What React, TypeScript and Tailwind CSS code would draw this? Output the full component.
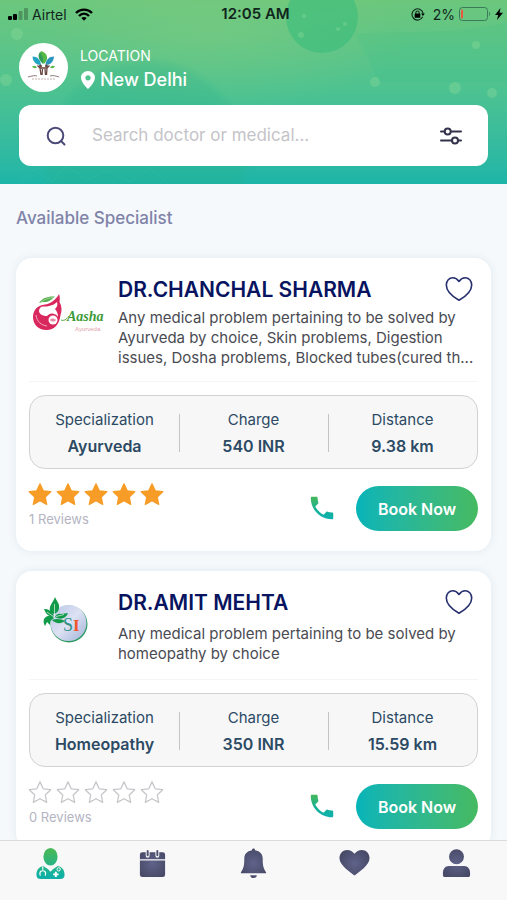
import type { ReactNode } from 'react'

interface Doctor {
  id: string
  name: string
  about: string
  specialization: string
  charge: string
  distance: string
  rating: number
  reviews: number
  logo: ReactNode
}

const STAR_PATH =
  'M12 1.8 L15.1 8.4 L22.3 9.3 L17 14.3 L18.4 21.4 L12 17.9 L5.6 21.4 L7 14.3 L1.7 9.3 L8.9 8.4 Z'

function AashaLogo() {
  return (
    <svg viewBox="0 0 76 44" className="h-11 w-19" role="img" aria-label="Aasha Ayurveda">
      <path
        d="M30 3c1 3 1 5 .5 8 2.500 4 2.500 9 1 13-1 9-6 15-14 15C9 39 4 33 4 26c0-7 5-12 12-12.500 5-.5 11-4.500 14-10.500Z"
        fill="#d9285d"
      />
      <path
        d="M12 16c2-1 5 0 8-1 4-1 6-2 8-4 1 3 0 5-2 7 2 2 3 5 3 8-1-2-3-3-4-3-3-1-5 0-7 2-4 0-8-2-8-5 0-2 1-3 2-4Z"
        fill="#fff"
      />
      <circle cx="24" cy="29" r="4.500" fill="#fff" />
      <path d="M21 29c1-2 4-2 6 0-1 2-5 2-6 0Z" fill="#e98aa5" />
      <path d="M7 24c1 7 5 10 11 11" stroke="#f3a9bf" fill="none" />
      <path d="M10 12C13 7 19 5 26 5.500c-3 2-4 4-7 5-3 1-6 0-9 1.500Z" fill="#55ad4d" />
      <path d="M12 11c4-3 8-4 12-4.500" stroke="#b9e0b0" strokeWidth="0.700" fill="none" />
      <path d="M32 29c3 1 5 0 8-4" stroke="#55ad4d" fill="none" />
      <text
        x="38"
        y="30"
        fill="#3d9a36"
        fontSize="14"
        fontStyle="italic"
        fontWeight="700"
        fontFamily="Liberation Serif, serif"
      >
        Aasha
      </text>
      <text x="46" y="40" fill="#dfa0ab" fontSize="6" fontFamily="Liberation Sans, sans-serif">
        Ayurveda
      </text>
    </svg>
  )
}

function SiLogo() {
  return (
    <svg viewBox="0 0 76 48" className="h-12 w-19" role="img" aria-label="SI">
      <defs>
        <linearGradient id="si-disc" x1="0" y1="0" x2="1" y2="1">
          <stop offset="0" stopColor="#b9c5e6" />
          <stop offset="0.5" stopColor="#dde2f4" />
          <stop offset="1" stopColor="#9fb0d6" />
        </linearGradient>
      </defs>
      <circle cx="40" cy="29" r="18.500" fill="#2d9c63" />
      <circle cx="39.500" cy="28" r="18" fill="url(#si-disc)" />
      <path
        d="M26 2c2 5 5 7 4 11 0 3-2 5-5 6-3-1-5-3-4-7 1-3 3-5 5-10ZM15 14c4 0 6 1 9 5l1 3c-4 0-8-2-10-8ZM15 24c3-4 7-4 10-1-3 2-4 3-4 7l-3-3-2 4c-1-2-2-4-1-7ZM26 22c1-3 4-4 6-3l7-1c-2 6-8 7-13 4ZM23 25c4-2 10-1 13 1-4 3-9 3-13-1Z"
        fill="#119a4a"
      />
      <path d="M25.500 9v13M18 17l7 5M27 21.500l8-2" stroke="#e6f5ea" strokeWidth="0.700" />
      <text x="34" y="36" fill="#2d8f83" fontSize="18" fontFamily="Liberation Serif, serif">
        S
      </text>
      <text x="44" y="36" fill="#f0562b" fontSize="17" fontWeight="700" fontFamily="Liberation Serif, serif">
        I
      </text>
    </svg>
  )
}

const doctors: Doctor[] = [
  {
    id: 'chanchal',
    name: 'DR.CHANCHAL SHARMA',
    about:
      'Any medical problem pertaining to be solved by Ayurveda by choice, Skin problems, Digestion issues, Dosha problems, Blocked tubes(cured th...',
    specialization: 'Ayurveda',
    charge: '540 INR',
    distance: '9.38 km',
    rating: 5,
    reviews: 1,
    logo: <AashaLogo />,
  },
  {
    id: 'amit',
    name: 'DR.AMIT MEHTA',
    about: 'Any medical problem pertaining to be solved by homeopathy by choice',
    specialization: 'Homeopathy',
    charge: '350 INR',
    distance: '15.59 km',
    rating: 0,
    reviews: 0,
    logo: <SiLogo />,
  },
]

function HeaderBackdrop() {
  return (
    <svg
      className="absolute inset-0 h-full w-full"
      viewBox="0 0 507 184"
      preserveAspectRatio="xMidYMid slice"
      aria-hidden="true"
    >
      <defs>
        <radialGradient id="header-glow">
          <stop offset="0" stopColor="#7fcc80" stopOpacity="0.5" />
          <stop offset="1" stopColor="#7fcc80" stopOpacity="0" />
        </radialGradient>
        <radialGradient id="header-globe">
          <stop offset="0.7" stopColor="#27b08c" stopOpacity="0.3" />
          <stop offset="0.9" stopColor="#27b08c" stopOpacity="0.25" />
          <stop offset="1" stopColor="#27b08c" stopOpacity="0" />
        </radialGradient>
      </defs>
      <ellipse cx="210" cy="30" rx="200" ry="80" fill="url(#header-glow)" />
      <circle cx="322" cy="17" r="36" fill="#38bd7c" opacity="0.6" />
      <circle cx="146" cy="162" r="106" fill="url(#header-globe)" />
      <path d="M355 34C400 30 450 36 507 22v60H380Z" fill="#2dbb8a" opacity="0.12" />
      <g fill="#8fdc9b" opacity="0.35">
        <circle cx="301" cy="35" r="3" />
        <circle cx="338" cy="29" r="2" />
        <circle cx="345" cy="24" r="2" />
        <circle cx="304" cy="16" r="2" />
        <circle cx="476" cy="45" r="4" />
        <circle cx="455" cy="88" r="6" />
        <circle cx="492" cy="93" r="5" />
        <circle cx="375" cy="82" r="5" />
        <circle cx="17" cy="34" r="6" />
        <circle cx="6" cy="80" r="6" />
      </g>
      <path d="M20 184l14-14 18 12 14-16 22 14 18-10 24 12 20-14 16 14" stroke="#39c0ab" opacity="0.3" fill="none" />
    </svg>
  )
}

function StatusBar() {
  return (
    <div className="grid h-7 grid-cols-3 items-center px-2 text-[14px] text-[#10261c]">
      <div className="flex items-center gap-1">
        <svg viewBox="0 0 20 12" className="h-3 w-5" aria-hidden="true">
          <rect x="0" y="8" width="4" height="4" rx="1" />
          <rect x="5" y="6" width="4" height="6" rx="1" />
          <rect x="10.500" y="3" width="4" height="9" rx="1" opacity="0.25" />
          <rect x="16" y="0" width="4" height="12" rx="1" opacity="0.25" />
        </svg>
        <span>Airtel</span>
        <svg viewBox="0 0 18 13" className="ml-1 h-[13px] w-[18px]" fill="none" stroke="#000" strokeWidth="2.400" aria-hidden="true">
          <path d="M1 5C5.500 0.500 12.500 0.500 17 5" />
          <path d="M4 8c3-3 7-3 10 0" />
          <path d="M9 12.800 6.300 10c1.600-1.400 3.800-1.400 5.400 0Z" fill="#000" stroke="none" />
        </svg>
      </div>
      <span className="pl-1 text-center text-[15px] font-semibold whitespace-nowrap">12:05 AM</span>
      <div className="-mr-1 flex items-center justify-end gap-1">
        <svg viewBox="0 0 16 16" className="mr-1 h-[15px] w-[15px]" aria-hidden="true">
          <path d="M13.500 10.500A6 6 0 1 1 14 7" fill="none" stroke="#10261c" strokeWidth="1.200" />
          <path d="M11.800 7h4l-2 2.600Z" />
          <rect x="5" y="7" width="6" height="4.500" rx="0.600" />
          <path d="M6.200 7.500V6a1.800 1.800 0 0 1 3.600 0v1.500" fill="none" stroke="#10261c" strokeWidth="1.100" />
        </svg>
        <span>2%</span>
        <svg viewBox="0 0 32 14" className="h-[14px] w-8" aria-hidden="true">
          <rect x="0.500" y="0.500" width="28" height="13" rx="3" fill="none" stroke="#3b7a58" />
          <rect x="2" y="2.500" width="2" height="9" rx="1" fill="#f0563c" />
          <path d="M30 4.500q2 2.500 0 5Z" fill="#3b7a58" />
        </svg>
        <svg viewBox="0 0 8 12" className="h-3 w-2" aria-hidden="true">
          <path d="M5.500 0 0 7h3.200L2 12l6-7.200H4.600Z" />
        </svg>
      </div>
    </div>
  )
}

function ClinicAvatar() {
  return (
    <svg viewBox="0 0 49 49" className="h-[49px] w-[49px]" role="img" aria-label="Clinic">
      <circle cx="24.500" cy="24.500" r="24.500" fill="#fff" />
      <path d="M22 8c7 2 8 8 3 13-5-4-6-8-3-13Z" fill="#56b947" />
      <path d="M21 9c-3 4-1 8 3 12V15Z" fill="#2f9d58" />
      <path d="M13.500 13.500c5 0 8 3 8.500 8.500-5 0-8-3-8.500-8.500Z" fill="#25a5c4" />
      <path d="M35 13.500c-5 0-8 3-8.500 8.500 5 0 8-3 8.500-8.500Z" fill="#2b93bd" />
      <path d="M13 23.500q3-2 5 1-3 2-5-1ZM36 23.500q-3-2-5 1 3 2 5-1Z" fill="#56b947" />
      <circle cx="21.500" cy="23" r="1.500" fill="#6a4540" />
      <circle cx="27.500" cy="23" r="1.500" fill="#6a4540" />
      <path
        d="M18.500 22.500l2.500 2.500h7l2.500-2.500M21 25l1 7M23.500 26l-.5 6M26 26l.5 6M28 25l-.5 7"
        stroke="#6a4540"
        strokeWidth="1.300"
        fill="none"
      />
      <path d="M9 34c4-1 7-2 9-1M31 33c3-1 6 0 9 1" stroke="#8b7a78" fill="none" />
      <path d="M13 36h24" stroke="#c4b2b0" strokeDasharray="2 1" />
    </svg>
  )
}

function Header() {
  return (
    <header className="relative shrink-0 bg-linear-to-b from-[#6cc77c] via-[#4cc291] to-[#1cb5a8] pb-[18px]">
      <HeaderBackdrop />
      <div className="relative">
        <StatusBar />
        <div className="mt-[15px] flex items-center gap-3 px-[19px]">
          <ClinicAvatar />
          <div className="text-white">
            <p className="text-[14px] leading-6">LOCATION</p>
            <p className="flex items-center gap-1 text-[18px] leading-6 font-medium">
              <svg viewBox="0 0 16 20" className="h-5 w-4" aria-hidden="true">
                <path
                  d="M8 1C4 1 1 4 1 7.700 1 12.500 8 19 8 19s7-6.500 7-11.300C15 4 12 1 8 1Zm0 4.200a2.600 2.600 0 1 1 0 5.200 2.600 2.600 0 0 1 0-5.200Z"
                  fill="#fff"
                />
              </svg>
              New Delhi
            </p>
          </div>
        </div>
        <form role="search" className="mx-[19px] mt-[13px] flex h-[61px] items-center rounded-xl bg-white px-[25px]">
          <label htmlFor="doctor-search" aria-label="Search doctor or medical" className="mr-6">
            <svg viewBox="0 0 24 24" className="h-6 w-6" fill="none" stroke="#4c4a78" strokeWidth="2" aria-hidden="true">
              <circle cx="11.500" cy="11.500" r="7.800" />
              <path d="m17 17 3.500 3.500" strokeLinecap="round" />
            </svg>
          </label>
          <input
            id="doctor-search"
            type="text"
            placeholder="Search doctor or medical..."
            className="min-w-0 flex-1 bg-transparent text-[17px] text-gray-700 outline-none placeholder:text-[#c4c4c8]"
          />
          <button type="button" aria-label="Filters">
            <svg viewBox="0 0 24 24" className="h-6 w-6" fill="none" stroke="#33324a" strokeWidth="2" strokeLinecap="round" aria-hidden="true">
              <path d="M2 7.500h3.500M12 7.500h10M2 16.500h10.500M19.500 16.500H22" />
              <circle cx="8.700" cy="7.500" r="3" />
              <circle cx="16" cy="16.500" r="3" />
            </svg>
          </button>
        </form>
      </div>
    </header>
  )
}

function Rating({ value, reviews }: { value: number; reviews: number }) {
  return (
    <div className="pt-[13px]">
      <div className="flex gap-1" role="img" aria-label={`${value} / 5`}>
        {[1, 2, 3, 4, 5].map((n) => (
          <svg key={n} viewBox="0.500 0 23 23" className="-ml-px mr-px h-6 w-6" aria-hidden="true">
            <path
              d={STAR_PATH}
              fill={n <= value ? '#f79c26' : '#fff'}
              stroke={n <= value ? '#f79c26' : '#c6c6cb'}
              strokeWidth="1.200"
              strokeLinejoin="round"
            />
          </svg>
        ))}
      </div>
      <p className="mt-[3px] text-[13px] leading-5 text-[#b4b4c2]">{reviews} Reviews</p>
    </div>
  )
}

function Stat({ label, value }: { label: string; value: string }) {
  return (
    <div className="relative flex-1 text-center text-[#2c4a63] not-first:before:absolute not-first:before:inset-y-2 not-first:before:left-0 not-first:before:w-px not-first:before:bg-[#c4c4c8]">
      <dt className="text-[15px] leading-[27px]">{label}</dt>
      <dd className="text-[16px] leading-[27px] font-semibold">{value}</dd>
    </div>
  )
}

function DoctorCard({ doctor }: { doctor: Doctor }) {
  return (
    <article className="rounded-2xl bg-white px-[13px] pb-5 shadow-[0_0_8px_rgba(60,90,120,0.1)]">
      <div className="flex items-center gap-[13px]">
        <div className="w-19 shrink-0">{doctor.logo}</div>
        <div className="min-w-0 flex-1 pt-4">
          <div className="flex items-center justify-between pr-[5px]">
            <h2 className="text-[21px] leading-8 font-semibold text-[#08145f]">{doctor.name}</h2>
            <button type="button" aria-label={`Save ${doctor.name}`}>
              <svg viewBox="0 0 28 28" className="h-7 w-7" fill="none" stroke="#27306f" strokeWidth="1.600" strokeLinejoin="round" aria-hidden="true">
                <path d="M14 24.300C10 22 1.300 16.300 1.300 9 1.300 4.700 4.300 1.800 7.800 1.800c2.600 0 4.500 1.300 6.200 3.600 1.700-2.300 3.600-3.600 6.200-3.600 3.500 0 6.500 2.900 6.500 7.200 0 7.300-8.700 13-12.700 15.300Z" />
              </svg>
            </button>
          </div>
          <div className="mt-[2px] flex min-h-[45px] items-center">
            <p className="text-[15px] leading-5 text-[#4a4b52]">{doctor.about}</p>
          </div>
        </div>
      </div>
      <hr className="mt-[13px] border-[#f5f5f7]" />
      <dl className="mt-[13px] flex rounded-2xl border border-[#d2d2d4] bg-[#f7f7f8] pt-[10px] pb-2">
        <Stat label="Specialization" value={doctor.specialization} />
        <Stat label="Charge" value={doctor.charge} />
        <Stat label="Distance" value={doctor.distance} />
      </dl>
      <div className="flex items-start">
        <Rating value={doctor.rating} reviews={doctor.reviews} />
        <button type="button" aria-label={`Call ${doctor.name}`} className="mt-6 mr-[19px] ml-auto">
          <svg viewBox="0 0 24 24" className="h-[30px] w-[30px]" aria-hidden="true">
            <defs>
              <linearGradient id={`call-${doctor.id}`} x1="0" y1="0" x2="0" y2="1">
                <stop offset="0" stopColor="#46b85a" />
                <stop offset="0.6" stopColor="#14b19b" />
                <stop offset="1" stopColor="#10b0ae" />
              </linearGradient>
            </defs>
            <path
              d="M6.620 10.790c1.440 2.830 3.760 5.140 6.590 6.590l2.200-2.200c.27-.27.67-.36 1.020-.24 1.120.37 2.330.57 3.570.57.55 0 1 .45 1 1V20c0 .55-.45 1-1 1-9.390 0-17-7.610-17-17 0-.55.45-1 1-1h3.500c.55 0 1 .45 1 1 0 1.250.2 2.450.57 3.570.11.35.03.74-.25 1.020l-2.200 2.200Z"
              fill={`url(#call-${doctor.id})`}
            />
          </svg>
        </button>
        <button
          type="button"
          className="mt-[17px] h-[45px] w-[122px] rounded-full bg-linear-to-r from-[#04b4b8] to-[#46ba60] text-[16px] font-semibold text-white"
        >
          Book Now
        </button>
      </div>
    </article>
  )
}

const navItems: { label: string; icon: ReactNode }[] = [
  {
    label: 'Doctors',
    icon: (
      <>
        <defs>
          <linearGradient id="nav-doctor" x1="0" y1="0" x2="0" y2="32" gradientUnits="userSpaceOnUse">
            <stop offset="0.1" stopColor="#46b85a" />
            <stop offset="0.9" stopColor="#10b0a6" />
          </linearGradient>
        </defs>
        <ellipse cx="16" cy="9" rx="7.300" ry="9" fill="url(#nav-doctor)" />
        <path
          d="M8.500 18.500l5 3.500 2.500 2.500 2.500-2.500 5-3.500c4.500 1 7 4 7 9 0 3-1.500 4.500-4.500 4.500H6c-3 0-4.500-1.500-4.500-4.500 0-5 2.500-8 7-9Z"
          fill="url(#nav-doctor)"
        />
        <path d="M8 19v3.500M5.500 28.500l-.5-2a3 3 0 1 1 6 0l-.5 2" stroke="#fff" strokeWidth="1.200" fill="none" />
        <circle cx="24.500" cy="22" r="1.700" stroke="#fff" fill="none" />
        <path d="M21.500 24.500v5.500M18.700 27.200h5.600" stroke="#fff" strokeWidth="2" />
      </>
    ),
  },
  {
    label: 'Appointments',
    icon: (
      <>
        <path d="M3 13h26v14.500a2.500 2.500 0 0 1-2.500 2.500h-21A2.500 2.500 0 0 1 3 27.500Z" />
        <path d="M5.500 4.500h21A2.500 2.500 0 0 1 29 7v4.700H3V7a2.500 2.500 0 0 1 2.500-2.500Z" />
        <path d="M11 3.500V8M21 3.500V8" stroke="#f8f8f9" strokeWidth="4" strokeLinecap="round" />
        <path d="M11 3v4.500M21 3v4.500" stroke="#4c4f70" strokeWidth="2" strokeLinecap="round" />
      </>
    ),
  },
  {
    label: 'Notifications',
    icon: (
      <>
        <path d="M16 0.500a1.500 1.500 0 0 1 1.500 1.700C23 3 25.500 6.500 25.500 11c0 8 1 10 3.500 14v1H3v-1c2.500-4 3.500-6 3.500-14C6.500 6.500 9 3 14.500 2.200A1.500 1.500 0 0 1 16 0.500Z" />
        <path d="M12.500 28h7c-.3 2-1.800 3-3.500 3s-3.200-1-3.500-3Z" />
      </>
    ),
  },
  {
    label: 'Favourites',
    icon: (
      <path d="M16 28.500C12 25 0.500 18 0.500 10.500 0.500 5.500 4 2 8.500 2c3 0 5.500 1.300 7.500 4 2-2.700 4.500-4 7.500-4 4.500 0 8 3.500 8 8.500C31.500 18 20 25 16 28.500Z" />
    ),
  },
  {
    label: 'Profile',
    icon: (
      <>
        <circle cx="16" cy="9" r="7.700" />
        <path d="M8 18.500h16c3.500 0 6 3 6 7v2.500c0 1-.7 2-2 2H4c-1.300 0-2-1-2-2V25.500c0-4 2.500-7 6-7Z" />
      </>
    ),
  },
]

function BottomNav() {
  return (
    <nav className="grid h-15 shrink-0 grid-cols-5 border-t border-[#dcdcde] bg-[#f8f8f9]">
      {navItems.map((item) => (
        <button key={item.label} type="button" aria-label={item.label} className="flex justify-center pt-[7px]">
          <svg viewBox="0 0 32 32" className="h-[31px] w-[31px]" fill={`url(#tint-${item.label})`} aria-hidden="true">
            <defs>
              <radialGradient id={`tint-${item.label}`} cx="16" cy="16" r="16" gradientUnits="userSpaceOnUse">
                <stop offset="0" stopColor="#5f6389" />
                <stop offset="1" stopColor="#484a68" />
              </radialGradient>
            </defs>
            {item.icon}
          </svg>
        </button>
      ))}
    </nav>
  )
}

function App() {
  return (
    <div className="flex h-screen flex-col bg-[#f5f9fc] font-['Inter',sans-serif]">
      <Header />
      <main className="min-h-0 flex-1 overflow-y-auto px-4 pt-5 [scrollbar-width:none]">
        <h1 className="text-[17px] leading-7 font-medium text-[#8083a8]">Available Specialist</h1>
        <div className="mt-[26px] flex flex-col gap-5 pb-5">
          {doctors.map((doctor) => (
            <DoctorCard key={doctor.id} doctor={doctor} />
          ))}
        </div>
      </main>
      <BottomNav />
    </div>
  )
}

export default App
